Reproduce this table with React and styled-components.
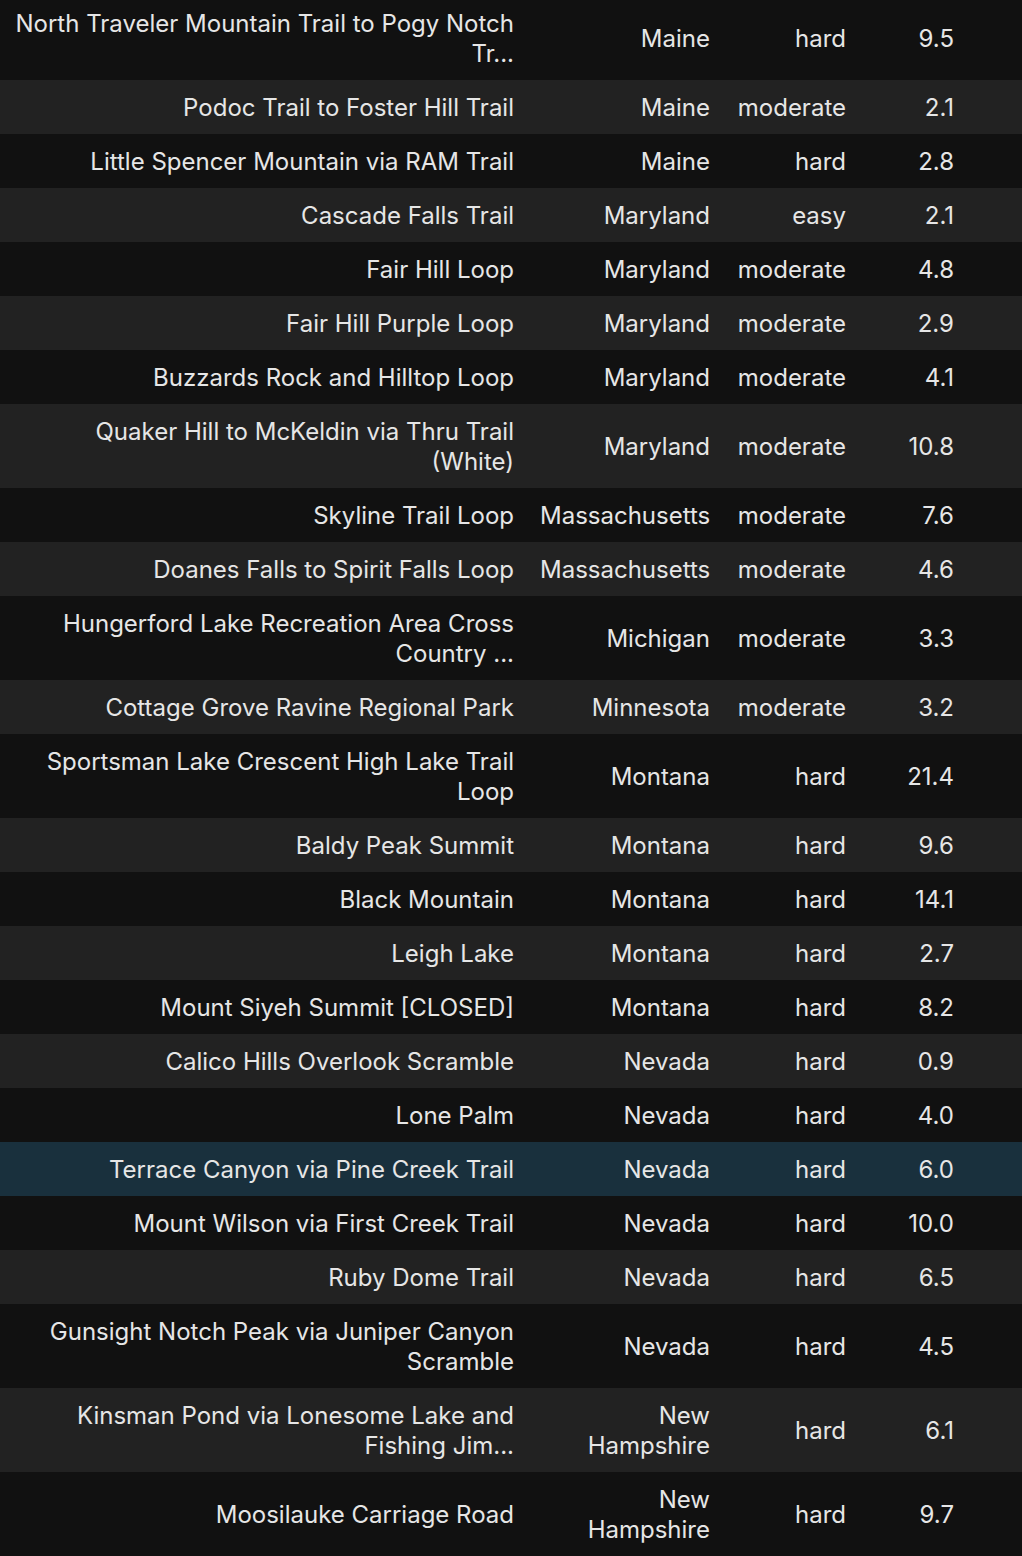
import React from 'react';
import styled, { createGlobalStyle } from 'styled-components';

const trails = [
  { name: 'North Traveler Mountain Trail to Pogy Notch Tr...', state: 'Maine', difficulty: 'hard', length: '9.5' },
  { name: 'Podoc Trail to Foster Hill Trail', state: 'Maine', difficulty: 'moderate', length: '2.1' },
  { name: 'Little Spencer Mountain via RAM Trail', state: 'Maine', difficulty: 'hard', length: '2.8' },
  { name: 'Cascade Falls Trail', state: 'Maryland', difficulty: 'easy', length: '2.1' },
  { name: 'Fair Hill Loop', state: 'Maryland', difficulty: 'moderate', length: '4.8' },
  { name: 'Fair Hill Purple Loop', state: 'Maryland', difficulty: 'moderate', length: '2.9' },
  { name: 'Buzzards Rock and Hilltop Loop', state: 'Maryland', difficulty: 'moderate', length: '4.1' },
  { name: 'Quaker Hill to McKeldin via Thru Trail (White)', state: 'Maryland', difficulty: 'moderate', length: '10.8' },
  { name: 'Skyline Trail Loop', state: 'Massachusetts', difficulty: 'moderate', length: '7.6' },
  { name: 'Doanes Falls to Spirit Falls Loop', state: 'Massachusetts', difficulty: 'moderate', length: '4.6' },
  { name: 'Hungerford Lake Recreation Area Cross Country ...', state: 'Michigan', difficulty: 'moderate', length: '3.3' },
  { name: 'Cottage Grove Ravine Regional Park', state: 'Minnesota', difficulty: 'moderate', length: '3.2' },
  { name: 'Sportsman Lake Crescent High Lake Trail Loop', state: 'Montana', difficulty: 'hard', length: '21.4' },
  { name: 'Baldy Peak Summit', state: 'Montana', difficulty: 'hard', length: '9.6' },
  { name: 'Black Mountain', state: 'Montana', difficulty: 'hard', length: '14.1' },
  { name: 'Leigh Lake', state: 'Montana', difficulty: 'hard', length: '2.7' },
  { name: 'Mount Siyeh Summit [CLOSED]', state: 'Montana', difficulty: 'hard', length: '8.2' },
  { name: 'Calico Hills Overlook Scramble', state: 'Nevada', difficulty: 'hard', length: '0.9' },
  { name: 'Lone Palm', state: 'Nevada', difficulty: 'hard', length: '4.0' },
  { name: 'Terrace Canyon via Pine Creek Trail', state: 'Nevada', difficulty: 'hard', length: '6.0', selected: true },
  { name: 'Mount Wilson via First Creek Trail', state: 'Nevada', difficulty: 'hard', length: '10.0' },
  { name: 'Ruby Dome Trail', state: 'Nevada', difficulty: 'hard', length: '6.5' },
  { name: 'Gunsight Notch Peak via Juniper Canyon Scramble', state: 'Nevada', difficulty: 'hard', length: '4.5' },
  { name: 'Kinsman Pond via Lonesome Lake and Fishing Jim...', state: 'New Hampshire', difficulty: 'hard', length: '6.1' },
  { name: 'Moosilauke Carriage Road', state: 'New Hampshire', difficulty: 'hard', length: '9.7' },
];

const GlobalStyle = createGlobalStyle`
  html, body {
    margin: 0;
    padding: 0;
    background: #111111;
    overflow: hidden;
  }
`;

const Table = styled.div`
  margin-top: -4px;
  font-family: Inter, "Noto Sans", sans-serif;
  font-size: 24px;
  line-height: 30px;
  color: #e6e6e6;
`;

const Row = styled.div`
  display: grid;
  grid-template-columns: 527px 196px 136px 108px 1fr;
  align-items: center;
  background: ${({ $selected, $striped }) =>
    $selected ? '#19303d' : $striped ? '#222222' : '#111111'};
`;

const Cell = styled.div`
  padding: 13px 13px 11px;
  text-align: right;
`;

const NameCell = styled(Cell)`
  display: -webkit-box;
  -webkit-box-orient: vertical;
  -webkit-line-clamp: 2;
  overflow: hidden;
`;

export default function App() {
  return (
    <>
      <GlobalStyle />
      <Table>
        {trails.map((t, i) => (
          <Row key={t.name} $striped={i % 2 === 1} $selected={t.selected}>
            <NameCell>{t.name}</NameCell>
            <Cell>{t.state}</Cell>
            <Cell>{t.difficulty}</Cell>
            <Cell>{t.length}</Cell>
            <Cell />
          </Row>
        ))}
      </Table>
    </>
  );
}
